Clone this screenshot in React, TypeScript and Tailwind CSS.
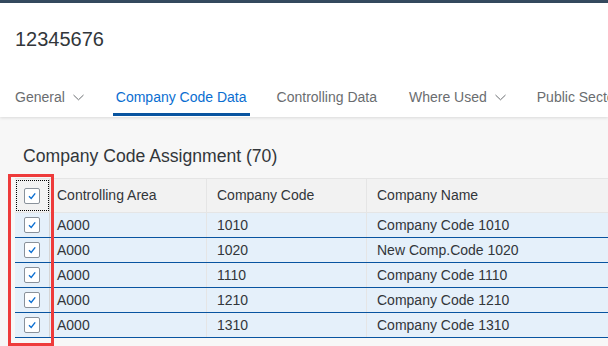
import React from "react";

const font = { fontFamily: '"Liberation Sans", Arial, sans-serif' };

function Check() {
  return (
    <div className="w-4 h-4 bg-white border border-[#89919a] rounded-[2px] flex items-center justify-center">
      <svg width="10" height="10" viewBox="0 0 10 10">
        <path d="M2 5.2 L4.2 7.4 L8.2 2.4" fill="none" stroke="#0a6ed1" strokeWidth="1.4" />
      </svg>
    </div>
  );
}

function Chevron() {
  return (
    <svg width="11" height="7" viewBox="0 0 11 7" className="ml-[8px]">
      <path d="M0.5 1 L5.5 5.8 L10.5 1" fill="none" stroke="#6a6d70" strokeWidth="1" />
    </svg>
  );
}

const rows = [
  ["A000", "1010", "Company Code 1010"],
  ["A000", "1020", "New Comp.Code 1020"],
  ["A000", "1110", "Company Code 1110"],
  ["A000", "1210", "Company Code 1210"],
  ["A000", "1310", "Company Code 1310"],
];

export default function App() {
  return (
    <div className="w-[608px] h-[346px] overflow-hidden bg-[#f7f7f7] relative" style={font}>
      <div className="h-[3px] bg-[#354a5f]" />
      <div className="bg-white relative z-10 shadow-[0_1px_3px_rgba(0,0,0,0.12)]">
        <div className="h-[75px] pl-[15px] pt-[22px] text-[20px] leading-[28px] text-[#32363a]">12345676</div>
        <div className="flex h-[39px] pl-[15px] text-[14px] text-[#6a6d70] whitespace-nowrap">
          <div className="flex items-center h-full mr-[32px]">General<Chevron /></div>
          <div className="relative flex items-center h-full px-[3px] -ml-[3px] text-[#0a6ed1] mr-[27px]">
            Company Code Data
            <div className="absolute left-0 right-0 bottom-[1px] h-[3px] bg-[#0854a0]" />
          </div>
          <div className="flex items-center h-full mr-[32px]">Controlling Data</div>
          <div className="flex items-center h-full mr-[31px]">Where Used<Chevron /></div>
          <div className="flex items-center h-full">Public Sector</div>
        </div>
      </div>
      <div className="pl-[23px] pt-[27px] h-[61px] text-[17.6px] leading-[24px] text-[#32363a]">Company Code Assignment (70)</div>
      <div className="ml-[15px] w-[700px] text-[14px] text-[#32363a] border-t border-[#e5e5e5]">
        <div className="flex h-[34px] bg-[#f2f2f2] border-b border-[#e5e5e5]">
          <div className="w-[35px] flex items-center justify-center border-r border-[#d5d5d5] relative">
            <div className="absolute left-[1px] top-[1px] w-[33px] h-[31px] border border-dotted border-black" />
            <Check />
          </div>
          <div className="w-[157px] pl-[7px] flex items-center border-r border-[#e5e5e5]">Controlling Area</div>
          <div className="w-[160px] pl-[10px] flex items-center border-r border-[#e5e5e5]">Company Code</div>
          <div className="flex-1 pl-[10px] flex items-center">Company Name</div>
        </div>
        {rows.map((r, i) => (
          <div key={i} className="flex h-[25px] bg-[#e5f0fa] border-b border-[#0854a0]">
            <div className="w-[35px] flex items-center justify-center border-r border-[#d5d5d5]">
              <Check />
            </div>
            <div className="w-[157px] pl-[7px] flex items-center border-r border-[#e5e5e5]">{r[0]}</div>
            <div className="w-[160px] pl-[10px] flex items-center border-r border-[#e5e5e5]">{r[1]}</div>
            <div className="flex-1 pl-[10px] flex items-center">{r[2]}</div>
          </div>
        ))}
      </div>
      <div className="absolute left-[8px] top-[174px] w-[46px] h-[172px] border-[3px] border-[#ee3b3b]" />
    </div>
  );
}
